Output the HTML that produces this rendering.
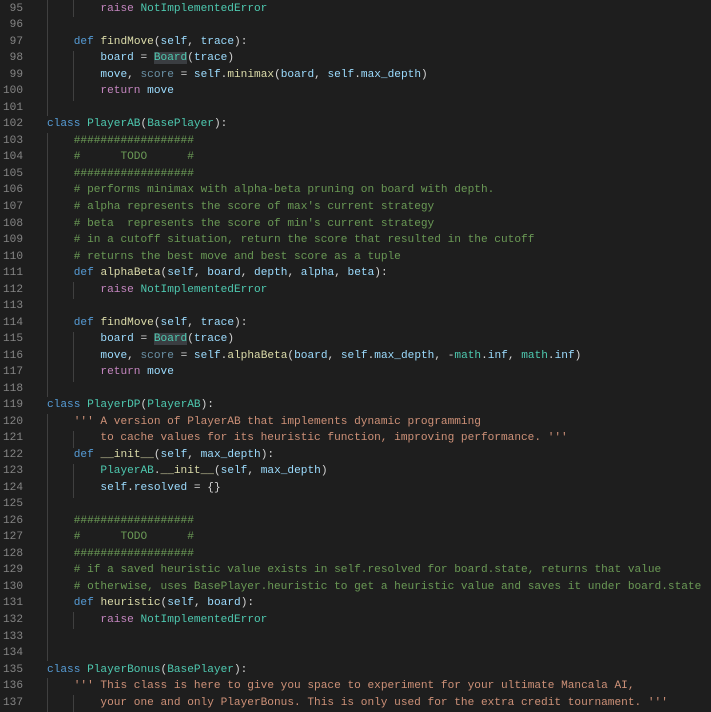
<!DOCTYPE html>
<html><head><style>
html,body{margin:0;padding:0;background:#1e1e1e;width:711px;height:712px;overflow:hidden}
#ed{position:relative;width:711px;height:712px;font-family:"Liberation Mono",monospace;font-size:11.13px;color:#d4d4d4}
.l{position:absolute;left:0;height:16.52px;line-height:16.52px;white-space:pre;width:711px}
.n{position:absolute;left:0;width:23px;text-align:right;color:#858585}
.c0{position:absolute;left:47px}
.k{color:#569cd6}.c{color:#c586c0}.f{color:#dcdcaa}.v{color:#9cdcfe}.t{color:#4ec9b0}.s{color:#ce9178}.m{color:#6a9955}.u{color:#9cdcfe;opacity:.6}
.h{background:#3a3d41}
.g{position:absolute;width:1px;background:#404040}
</style></head><body><div id="ed">
<div class="g" style="left:47px;top:0;height:116px"></div>
<div class="g" style="left:47px;top:133px;height:264px"></div>
<div class="g" style="left:47px;top:414px;height:247px"></div>
<div class="g" style="left:47px;top:678px;height:34px"></div>
<div class="g" style="left:73px;top:0;height:17px"></div>
<div class="g" style="left:73px;top:51px;height:50px"></div>
<div class="g" style="left:73px;top:282px;height:17px"></div>
<div class="g" style="left:73px;top:332px;height:50px"></div>
<div class="g" style="left:73px;top:431px;height:17px"></div>
<div class="g" style="left:73px;top:464px;height:34px"></div>
<div class="g" style="left:73px;top:612px;height:17px"></div>
<div class="g" style="left:73px;top:695px;height:17px"></div>

<div class="l" style="top:0.7px"><span class="n">95</span><span class="c0">        <span class="c">raise</span> <span class="t">NotImplementedError</span></span></div>
<div class="l" style="top:17.2px"><span class="n">96</span></div>
<div class="l" style="top:33.7px"><span class="n">97</span><span class="c0">    <span class="k">def</span> <span class="f">findMove</span>(<span class="v">self</span>, <span class="v">trace</span>):</span></div>
<div class="l" style="top:50.3px"><span class="n">98</span><span class="c0">        <span class="v">board</span> = <span class="t h">Board</span>(<span class="v">trace</span>)</span></div>
<div class="l" style="top:66.8px"><span class="n">99</span><span class="c0">        <span class="v">move</span>, <span class="u">score</span> = <span class="v">self</span>.<span class="f">minimax</span>(<span class="v">board</span>, <span class="v">self</span>.<span class="v">max_depth</span>)</span></div>
<div class="l" style="top:83.3px"><span class="n">100</span><span class="c0">        <span class="c">return</span> <span class="v">move</span></span></div>
<div class="l" style="top:99.8px"><span class="n">101</span></div>
<div class="l" style="top:116.3px"><span class="n">102</span><span class="c0"><span class="k">class</span> <span class="t">PlayerAB</span>(<span class="t">BasePlayer</span>):</span></div>
<div class="l" style="top:132.9px"><span class="n">103</span><span class="c0">    <span class="m">##################</span></span></div>
<div class="l" style="top:149.4px"><span class="n">104</span><span class="c0">    <span class="m">#      TODO      #</span></span></div>
<div class="l" style="top:165.9px"><span class="n">105</span><span class="c0">    <span class="m">##################</span></span></div>
<div class="l" style="top:182.4px"><span class="n">106</span><span class="c0">    <span class="m"># performs minimax with alpha-beta pruning on board with depth.</span></span></div>
<div class="l" style="top:198.9px"><span class="n">107</span><span class="c0">    <span class="m"># alpha represents the score of max's current strategy</span></span></div>
<div class="l" style="top:215.5px"><span class="n">108</span><span class="c0">    <span class="m"># beta  represents the score of min's current strategy</span></span></div>
<div class="l" style="top:232px"><span class="n">109</span><span class="c0">    <span class="m"># in a cutoff situation, return the score that resulted in the cutoff</span></span></div>
<div class="l" style="top:248.5px"><span class="n">110</span><span class="c0">    <span class="m"># returns the best move and best score as a tuple</span></span></div>
<div class="l" style="top:265px"><span class="n">111</span><span class="c0">    <span class="k">def</span> <span class="f">alphaBeta</span>(<span class="v">self</span>, <span class="v">board</span>, <span class="v">depth</span>, <span class="v">alpha</span>, <span class="v">beta</span>):</span></div>
<div class="l" style="top:281.5px"><span class="n">112</span><span class="c0">        <span class="c">raise</span> <span class="t">NotImplementedError</span></span></div>
<div class="l" style="top:298.1px"><span class="n">113</span></div>
<div class="l" style="top:314.6px"><span class="n">114</span><span class="c0">    <span class="k">def</span> <span class="f">findMove</span>(<span class="v">self</span>, <span class="v">trace</span>):</span></div>
<div class="l" style="top:331.1px"><span class="n">115</span><span class="c0">        <span class="v">board</span> = <span class="t h">Board</span>(<span class="v">trace</span>)</span></div>
<div class="l" style="top:347.6px"><span class="n">116</span><span class="c0">        <span class="v">move</span>, <span class="u">score</span> = <span class="v">self</span>.<span class="f">alphaBeta</span>(<span class="v">board</span>, <span class="v">self</span>.<span class="v">max_depth</span>, -<span class="t">math</span>.<span class="v">inf</span>, <span class="t">math</span>.<span class="v">inf</span>)</span></div>
<div class="l" style="top:364.1px"><span class="n">117</span><span class="c0">        <span class="c">return</span> <span class="v">move</span></span></div>
<div class="l" style="top:380.7px"><span class="n">118</span></div>
<div class="l" style="top:397.2px"><span class="n">119</span><span class="c0"><span class="k">class</span> <span class="t">PlayerDP</span>(<span class="t">PlayerAB</span>):</span></div>
<div class="l" style="top:413.7px"><span class="n">120</span><span class="c0">    <span class="s">''' A version of PlayerAB that implements dynamic programming</span></span></div>
<div class="l" style="top:430.2px"><span class="n">121</span><span class="c0"><span class="s">        to cache values for its heuristic function, improving performance. '''</span></span></div>
<div class="l" style="top:446.7px"><span class="n">122</span><span class="c0">    <span class="k">def</span> <span class="f">__init__</span>(<span class="v">self</span>, <span class="v">max_depth</span>):</span></div>
<div class="l" style="top:463.3px"><span class="n">123</span><span class="c0">        <span class="t">PlayerAB</span>.<span class="f">__init__</span>(<span class="v">self</span>, <span class="v">max_depth</span>)</span></div>
<div class="l" style="top:479.8px"><span class="n">124</span><span class="c0">        <span class="v">self</span>.<span class="v">resolved</span> = {}</span></div>
<div class="l" style="top:496.3px"><span class="n">125</span></div>
<div class="l" style="top:512.8px"><span class="n">126</span><span class="c0">    <span class="m">##################</span></span></div>
<div class="l" style="top:529.3px"><span class="n">127</span><span class="c0">    <span class="m">#      TODO      #</span></span></div>
<div class="l" style="top:545.9px"><span class="n">128</span><span class="c0">    <span class="m">##################</span></span></div>
<div class="l" style="top:562.4px"><span class="n">129</span><span class="c0">    <span class="m"># if a saved heuristic value exists in self.resolved for board.state, returns that value</span></span></div>
<div class="l" style="top:578.9px"><span class="n">130</span><span class="c0">    <span class="m"># otherwise, uses BasePlayer.heuristic to get a heuristic value and saves it under board.state</span></span></div>
<div class="l" style="top:595.4px"><span class="n">131</span><span class="c0">    <span class="k">def</span> <span class="f">heuristic</span>(<span class="v">self</span>, <span class="v">board</span>):</span></div>
<div class="l" style="top:611.9px"><span class="n">132</span><span class="c0">        <span class="c">raise</span> <span class="t">NotImplementedError</span></span></div>
<div class="l" style="top:628.5px"><span class="n">133</span></div>
<div class="l" style="top:645px"><span class="n">134</span></div>
<div class="l" style="top:661.5px"><span class="n">135</span><span class="c0"><span class="k">class</span> <span class="t">PlayerBonus</span>(<span class="t">BasePlayer</span>):</span></div>
<div class="l" style="top:678px"><span class="n">136</span><span class="c0">    <span class="s">''' This class is here to give you space to experiment for your ultimate Mancala AI,</span></span></div>
<div class="l" style="top:694.5px"><span class="n">137</span><span class="c0"><span class="s">        your one and only PlayerBonus. This is only used for the extra credit tournament. '''</span></span></div>
</div></body></html>
